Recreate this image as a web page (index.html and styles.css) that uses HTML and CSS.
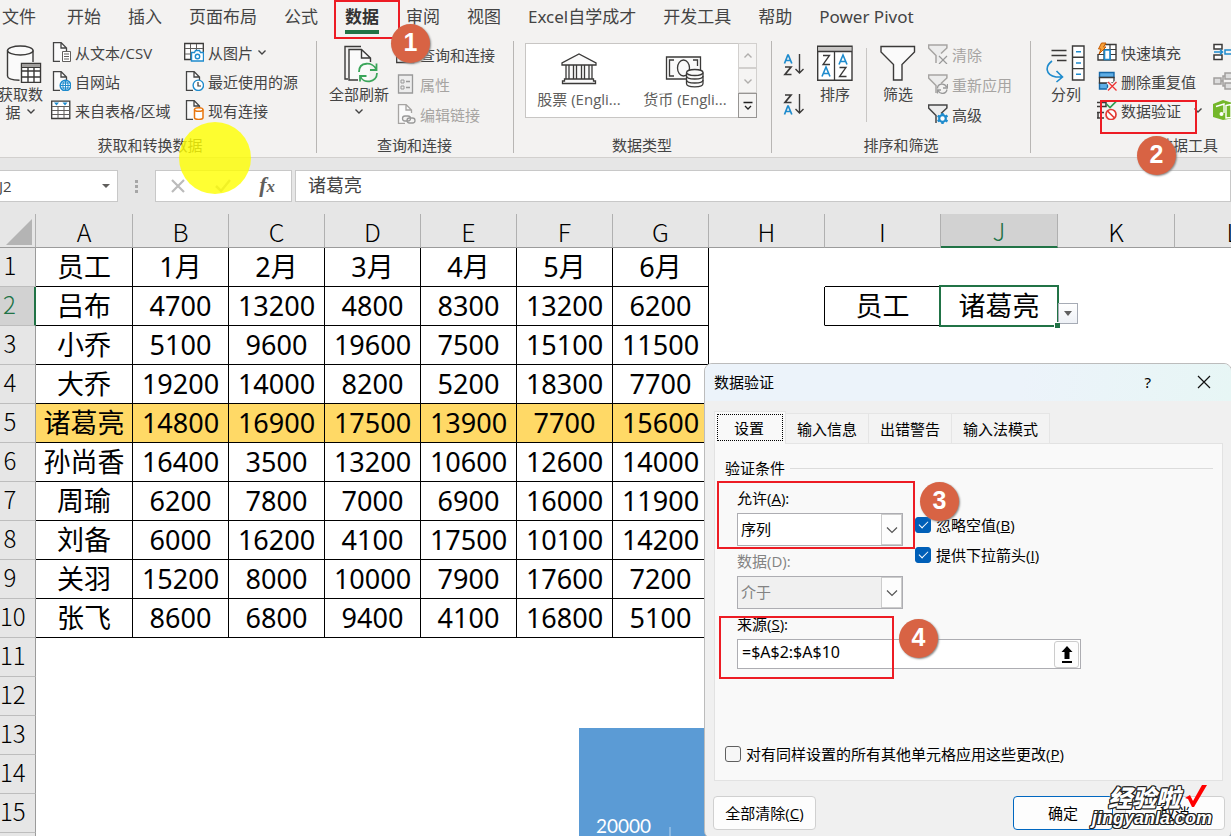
FILE: index.html
```html
<!DOCTYPE html>
<html lang="zh-CN">
<head>
<meta charset="utf-8">
<title>数据验证</title>
<link rel="stylesheet" href="styles.css">
</head>
<body>
<svg class="defs" aria-hidden="true">
  <symbol id="page" viewBox="0 0 20 20"><path d="M2.500 .5H10l5.500 5.500V19.500H2.500Z" fill="#fafafa" stroke="none"/><path d="M9 19.500H2.500V.5H10l5.500 5.500V9M10 .5V6h5.500" fill="none" stroke="currentColor" stroke-width="1.300"/></symbol>
  <symbol id="chev" viewBox="0 0 10 10"><path d="M1.500 3.500 5 7l3.500-3.500" fill="none" stroke="currentColor" stroke-width="1.400"/></symbol>
  <symbol id="funnel" viewBox="0 0 20 20"><path d="M.6 1h18.300v3L12 11v8l-4-3v-5L.6 4Z" fill="#ececec" stroke="none"/><path d="M13 9.500 18.900 4V1H.6v3L8 11.500V19" fill="none" stroke="currentColor" stroke-width="1.500"/></symbol>
</svg>
<div class="app">
  <nav class="tabs">
    <button class="file">文件</button><button>开始</button><button>插入</button><button>页面布局</button><button>公式</button><button class="active">数据</button><button>审阅</button><button>视图</button><button>Excel自学成才</button><button>开发工具</button><button>帮助</button><button>Power Pivot</button>
  </nav>

  <section class="ribbon">
    <div class="group g-get">
      <div class="group-body">
        <button class="big">
          <svg width="45" height="38" viewBox="0 0 45 38"><path d="M9.500 5v26c0 3 5 4.500 12.500 4.500h.5V20H35V5Z" fill="#fafafa"/><g fill="none" stroke="#3b3a39" stroke-width="1.400"><ellipse cx="22.300" cy="5.500" rx="12.800" ry="4.500" fill="#fafafa"/><path d="M9.500 5.500V31c0 2.500 5 4 12 4.200M35 5.500V17"/><path d="M23.500 18.500h19v19h-19Z" fill="#fff"/><path d="M23.500 26h19M23.500 32h19M30 22v15M36 22v15"/></g><path d="M24 19h18v3.500H24Z" fill="#a19f9d"/><path d="M23.500 22.500h19" stroke="#3b3a39"/></svg>
          <span>获取数</span><span>据 <svg width="10" height="10"><use href="#chev"/></svg></span>
        </button>
        <div class="stack">
          <button><svg width="20" height="20"><use href="#page"/><path d="M11.500 9.500h8v10h-8Z" fill="#fff" stroke="#605e5c"/><path d="M13 12h5M13 14.500h5M13 17h5" stroke="#605e5c"/></svg>从文本/CSV</button>
          <button><svg width="20" height="20"><use href="#page"/><circle cx="14.500" cy="14.500" r="5.300" fill="#fff" stroke="#1e8bcd" stroke-width="1.500"/><path d="M9 14.500h11M14.500 9v11M10.500 12h8M10.500 17h8M14.500 9c-3.500 3-3.500 8 0 11M14.500 9c3.500 3 3.500 8 0 11" fill="none" stroke="#1e8bcd"/></svg>自网站</button>
          <button><svg width="20" height="20"><path d="M.7 1.200h18.100v17.300H.7Z" fill="#fff" stroke="#3b3a39" stroke-width="1.300"/><path d="M1 6.500h18M1 10.500h18M1 14.500h18M7 6.500v12M13 6.500v12" stroke="#605e5c"/><path d="M3 2.500h5L5.500 5.500ZM11.500 2.500h5L14 5.500Z" fill="#1e8bcd"/></svg>来自表格/区域</button>
        </div>
        <div class="stack">
          <button><svg width="20" height="20"><path d="M.7 1.500h18.600v16H.7Z" fill="#fff" stroke="#3b3a39" stroke-width="1.300"/><path d="M1 6.500h18M1 12h18M6.500 2v15M12.500 2v15" stroke="#605e5c"/><path d="M7.500 10.500h3l1-2h4l1 2h3v8.500h-12Z" fill="#fff" stroke="#1e8bcd" stroke-width="1.400"/><circle cx="13.500" cy="14.500" r="2.200" fill="none" stroke="#1e8bcd" stroke-width="1.400"/></svg>从图片<svg width="10" height="10"><use href="#chev"/></svg></button>
          <button><svg width="20" height="20"><use href="#page"/><circle cx="14.300" cy="14.300" r="5.200" fill="#fff" stroke="#1e8bcd" stroke-width="1.400"/><path d="M14 11v4h3" fill="none" stroke="#3b3a39" stroke-width="1.200"/></svg>最近使用的源</button>
          <button><svg width="20" height="20"><use href="#page"/><path d="M10.500 9.500v8c0 2.500 8.500 2.500 8.500 0v-8" fill="#fff" stroke="#e8760f" stroke-width="1.500"/><ellipse cx="14.700" cy="9.500" rx="4.200" ry="1.800" fill="#fff" stroke="#e8760f" stroke-width="1.500"/></svg>现有连接</button>
        </div>
      </div>
      <div class="group-name">获取和转换数据</div>
    </div>

    <div class="group g-query">
      <div class="group-body">
        <button class="big">
          <svg width="45" height="38" viewBox="0 0 45 38"><path d="M12 4.500h12l8.500 8V35H12Z" fill="#fafafa"/><g fill="none" stroke="#3b3a39" stroke-width="1.400"><path d="M24 1.500H8V34h3M21 35H12V4.500h12.500l9 8.500v4M24.500 4.500V13h9"/></g><g fill="none" stroke="#3ba55a" stroke-width="1.800"><path d="M22 27c0-11 14-10 17-3M40 28c0 10-14 11-16.500 3.500M39.500 18.500V25H33M23 36.500V31h6.500"/></g></svg>
          <span>全部刷新</span><span><svg width="10" height="10"><use href="#chev"/></svg></span>
        </button>
        <div class="stack low">
          <button><svg width="20" height="20"><path d="M.7 3.500h17v15H.7Z" fill="#fff" stroke="#3b3a39" stroke-width="1.300"/><path d="M4 8h10M4 12h10" stroke="#605e5c"/></svg>查询和连接</button>
          <button disabled><svg width="20" height="20"><path d="M2.500 1h14v18h-14Z" fill="#ededed" stroke="#999" stroke-width="1.300"/><path d="M5 6h3v3H5ZM5 12h3v3H5Z" fill="none" stroke="#999"/><path d="M10 7.500h4M10 13.500h4" stroke="#999" stroke-width="1.500"/></svg>属性</button>
          <button disabled><svg width="20" height="20"><use href="#page"/><g fill="#f3f2f1" stroke="#999" stroke-width="1.300"><rect x="6.500" y="12" width="8" height="5" rx="2.500"/><rect x="11" y="14" width="8" height="5" rx="2.500" fill="none"/></g></svg>编辑链接</button>
        </div>
      </div>
      <div class="group-name">查询和连接</div>
    </div>

    <div class="group g-types">
      <div class="group-body">
        <div class="gallery">
          <button class="type"><svg width="36" height="36" viewBox="0 0 36 36"><g fill="#fafafa" stroke="#3b3a39" stroke-width="1.300"><path d="M1 13V11L18 2l17 9v2ZM5 13v14h26V13ZM3.500 27h29v2h2v2.500h-33V29h2Z"/><path d="M8 13v14M12.500 13v14M15.500 13v14M20.500 13v14M23.500 13v14M28 13v14" fill="none"/></g></svg>股票 (Engli...</button>
          <button class="type"><svg width="40" height="36" viewBox="0 0 40 36"><g fill="#fafafa" stroke="#3b3a39" stroke-width="1.300"><path d="M1.500 5h34v22h-34Z"/><path d="M9 8H4.500v16H9M28 8h4.500v6" fill="none"/><ellipse cx="18.500" cy="16" rx="6" ry="8"/><path d="M21.500 20.500v11c0 4.500 16.500 4.500 16.500 0v-11"/><ellipse cx="29.800" cy="20.500" rx="8.200" ry="3"/><path d="M21.500 24c0 4 16.500 4 16.500 0M21.500 28c0 4 16.500 4 16.500 0" fill="none"/></g></svg>货币 (Engli...</button>
          <div class="gallery-nav">
            <button class="up" disabled aria-label="向上"><svg width="10" height="10"><use href="#chev"/></svg></button>
            <button disabled aria-label="向下"><svg width="10" height="10"><use href="#chev"/></svg></button>
            <button class="more" aria-label="其他"><svg width="10" height="10"><path d="M.5 1.500h9M2 5l3 3 3-3" fill="none" stroke="#222" stroke-width="1.300"/></svg></button>
          </div>
        </div>
      </div>
      <div class="group-name">数据类型</div>
    </div>

    <div class="group g-sort">
      <div class="group-body">
        <div class="az">
          <button aria-label="升序"><svg width="22" height="24" viewBox="0 0 22 24"><g fill="none" stroke-width="1.700"><path d="M1.500 10.500 4.800 2h.5l3.500 8.500M2.500 7.500h5" stroke="#1e8bcd"/><path d="M2 14h6L2 21.500h6.500" stroke="#3b3a39"/><path d="M16.500 1v18.500M12.500 16l4 4 4-4" stroke="#3b3a39" stroke-width="1.400"/></g></svg></button>
          <button aria-label="降序"><svg width="22" height="24" viewBox="0 0 22 24"><g fill="none" stroke-width="1.700"><path d="M2 2h6L2 9.500h6.500" stroke="#3b3a39"/><path d="M1.500 21.500 4.800 13h.5l3.500 8.500M2.500 18.500h5" stroke="#1e8bcd"/><path d="M16.500 1v18.500M12.500 16l4 4 4-4" stroke="#3b3a39" stroke-width="1.400"/></g></svg></button>
        </div>
        <button class="big">
          <svg width="38" height="38" viewBox="0 0 38 38"><path d="M1.700 1.200h34.300v34H1.700Z" fill="#fff" stroke="#3b3a39" stroke-width="1.400"/><path d="M2.400 2h33v4H2.400Z" fill="#c8c6c4"/><g fill="none" stroke="#3b3a39" stroke-width="1.300"><path d="M2 6.500h34M18.500 6.500V35M7 10.500h6.500L7 19.500h7M23.500 22.500H30l-6.500 9h7"/><path d="M6 31.500l4-9.500 4 9.500M7.500 28.500h5M23 19.500l4-9.500 4 9.500M24.500 16.500h5" stroke="#1e8bcd" stroke-width="1.600"/></g></svg>
          <span>排序</span>
        </button>
        <div class="rule"></div>
        <button class="big">
          <svg width="38" height="38" viewBox="0 0 38 38"><path d="M2 1.500h33.500v5.500L23 19.500V35h-8.500V19.500L2 7Z" fill="#fafafa" stroke="#3b3a39" stroke-width="1.400"/></svg>
          <span>筛选</span>
        </button>
        <div class="stack low">
          <button disabled><svg width="20" height="20"><use href="#funnel"/><path d="M11 12l8 8M19 12l-8 8" stroke="#999" stroke-width="1.200"/></svg>清除</button>
          <button disabled><svg width="20" height="20"><use href="#funnel"/><path d="M9.500 14.500c0-5 7-6 9-1.500M19.500 10v4H15M19 15.500c-1 5-7 5-9 1M9.500 19.500v-3.500H13" fill="none" stroke="#999" stroke-width="1.300"/></svg>重新应用</button>
          <button><svg width="20" height="20"><use href="#funnel"/><circle cx="14.500" cy="14.500" r="3.300" fill="#fff" stroke="#1e8bcd" stroke-width="2.200"/><path d="M14.500 9v2M14.500 18v2M9.700 11.700l2 1.200M17.500 16.200l2 1.200M9.700 17.300l2-1.200M17.500 12.800l2-1.200" stroke="#1e8bcd" stroke-width="2.400"/></svg>高级</button>
        </div>
      </div>
      <div class="group-name">排序和筛选</div>
    </div>

    <div class="group g-tools">
      <div class="group-body">
        <button class="big">
          <svg width="40" height="38" viewBox="0 0 40 38"><g fill="none" stroke="#3b3a39" stroke-width="1.400"><path d="M5.500 5.500h15M5.500 10.500h15M11 15.500h9.500"/><path d="M26.500 1h11.500v34H26.500ZM26.500 12.300H38M26.500 23.600H38" fill="#fff"/></g><path d="M30 6.700h5M30 18h5M30 29.300h5" stroke="#1e8bcd" stroke-width="1.500"/><path d="M6 16c-7 5-7 14 4 16h6M10.500 26l6 6-6 5" fill="none" stroke="#1e8bcd" stroke-width="1.600"/></svg>
          <span>分列</span>
        </button>
        <div class="stack tools">
          <button><svg width="20" height="20"><path d="M6.500 2.500h12.500v15.500h-18V12" fill="#fff" stroke="#3b3a39" stroke-width="1.400"/><path d="M1 12.500h18M7 7.500h12M7 7v11M13 2.500V18" stroke="#3b3a39" stroke-width="1.200"/><path d="M7.500 8h5.500v9.500H7.500Z" fill="#fff" stroke="#1e8bcd" stroke-width="1.600"/><path d="M4.500 1h4.500L6.500 5H9l-7 7 2-5H1.500Z" fill="#f7a23b" stroke="#c65a00"/></svg>快速填充</button>
          <button><svg width="20" height="20"><path d="M2.500 1.500h14.500v5H2.500ZM2.500 12h8v6h-8Z" fill="#5eaee6" stroke="#1668a8" stroke-width="1.400"/><path d="M2.500 6.500h14.500V12H2.500Z" fill="#fff" stroke="#3b3a39" stroke-width="1.300"/><path d="M11 11l8.500 8.500M19.500 11 11 19.500" stroke="#f3f2f1" stroke-width="4"/><path d="M11 11l8.500 8.500M19.500 11 11 19.500" stroke="#e33" stroke-width="1.300"/></svg>删除重复值</button>
          <button><svg width="20" height="20"><path d="M0 2.500h9v4H0M0 18h7M0 12.500h7M1 12.500V18" fill="none" stroke="#3b3a39" stroke-width="1.500"/><path d="M9.500 4l3.500 3.500L19.500 1" fill="none" stroke="#2e9b50" stroke-width="1.600"/><circle cx="14" cy="14.500" r="5" fill="#fff" stroke="#e33b35" stroke-width="1.700"/><path d="M10.500 11l7 7" stroke="#e33b35" stroke-width="1.700"/></svg>数据验证<svg class="far" width="10" height="10"><use href="#chev"/></svg></button>
        </div>
        <div class="stack edge">
          <button aria-label="合并计算"><svg width="20" height="20"><path d="M1 2.500h8v4.500H1ZM1 13h8v4.500H1Z" fill="#fff" stroke="#3b3a39" stroke-width="1.500"/><path d="M1 10h9M7 7.500 9.500 10 7 12.500M12 8h8v4h-8Z" fill="none" stroke="#1e8bcd" stroke-width="1.500"/></svg></button>
          <button aria-label="关系"><svg width="20" height="20"><path d="M1 7h7v6H1ZM12 2h8v6h-8ZM12 12h8v6h-8ZM8 10h2V5h2M10 10v5h2" fill="#ddd" stroke="#a19f9d" stroke-width="1.500"/></svg></button>
          <button aria-label="管理数据模型"><svg width="20" height="20"><path d="M0 4 10 0l10 3v15l-10 2L0 17Z" fill="#74b72b"/><path d="M3 6.500 11 4v9M13 5.500l5-1v13l-5 .5Z" fill="none" stroke="#fff" stroke-width="1.400"/><circle cx="8.500" cy="14" r="2" fill="#fff"/></svg></button>
        </div>
      </div>
      <div class="group-name">数据工具</div>
    </div>
  </section>

  <section class="formula-bar">
    <label class="name-box"><input value="J2" aria-label="名称框"><svg width="10" height="10"><path d="M1 3h8L5 7Z" fill="#605e5c"/></svg></label>
    <svg class="dots" width="4" height="16"><path d="M0 1h3v3H0ZM0 6h3v3H0ZM0 11h3v3H0Z" fill="#a6a6a6"/></svg>
    <div class="fx">
      <button aria-label="取消输入"><svg width="16" height="16"><path d="M2 2l12 12M14 2 2 14" stroke="#bbb" stroke-width="2.200"/></svg></button>
      <button aria-label="输入"><svg width="18" height="16"><path d="M2 8l5 5L16 2" fill="none" stroke="#bbb" stroke-width="2.500"/></svg></button>
      <button class="fn" aria-label="插入函数"><i>f<small>x</small></i></button>
    </div>
    <input class="formula" value="诸葛亮" aria-label="编辑栏">
  </section>

  <main class="sheet">
    <table>
      <colgroup><col class="c-row"><col class="c-a"><col span="6" class="c-data"><col span="2" class="c-wide"><col span="3" class="c-wider"></colgroup>
      <thead><tr><th class="corner"><svg width="26" height="26"><path d="M26 0v26H0Z" fill="#b4b4b4"/></svg></th><th>A</th><th>B</th><th>C</th><th>D</th><th>E</th><th>F</th><th>G</th><th>H</th><th>I</th><th class="sel">J</th><th>K</th><th>L</th></tr></thead>
      <tbody>
        <tr><th>1</th><td>员工</td><td>1月</td><td>2月</td><td>3月</td><td>4月</td><td>5月</td><td>6月</td><td class="blank"></td><td class="blank under"></td><td class="blank under"></td></tr>
        <tr><th class="sel">2</th><td>吕布</td><td>4700</td><td>13200</td><td>4800</td><td>8300</td><td>13200</td><td>6200</td><td class="blank before"></td><td>员工</td><td class="active-cell">诸葛亮<button class="cell-drop" aria-label="下拉列表"><svg width="8" height="5"><path d="M0 0h8L4 5Z" fill="#606060"/></svg></button></td></tr>
        <tr><th>3</th><td>小乔</td><td>5100</td><td>9600</td><td>19600</td><td>7500</td><td>15100</td><td>11500</td></tr>
        <tr><th>4</th><td>大乔</td><td>19200</td><td>14000</td><td>8200</td><td>5200</td><td>18300</td><td>7700</td></tr>
        <tr class="hit"><th>5</th><td>诸葛亮</td><td>14800</td><td>16900</td><td>17500</td><td>13900</td><td>7700</td><td>15600</td></tr>
        <tr><th>6</th><td>孙尚香</td><td>16400</td><td>3500</td><td>13200</td><td>10600</td><td>12600</td><td>14000</td></tr>
        <tr><th>7</th><td>周瑜</td><td>6200</td><td>7800</td><td>7000</td><td>6900</td><td>16000</td><td>11900</td></tr>
        <tr><th>8</th><td>刘备</td><td>6000</td><td>16200</td><td>4100</td><td>17500</td><td>10100</td><td>14200</td></tr>
        <tr><th>9</th><td>关羽</td><td>15200</td><td>8000</td><td>10000</td><td>7900</td><td>17600</td><td>7200</td></tr>
        <tr><th>10</th><td>张飞</td><td>8600</td><td>6800</td><td>9400</td><td>4100</td><td>16800</td><td>5100</td></tr>
        <tr><th>11</th></tr>
        <tr><th>12</th></tr>
        <tr><th>13</th></tr>
        <tr><th>14</th></tr>
        <tr><th>15</th></tr>
        <tr><th></th></tr>
      </tbody>
    </table>
  </main>

  <div class="chart"><span>20000</span><i></i></div>

  <form class="dialog" role="dialog" aria-label="数据验证">
    <header><h1>数据验证</h1><button type="button" class="help" aria-label="帮助">?</button><button type="button" aria-label="关闭"><svg width="14" height="14"><path d="M1 1l12 12M13 1 1 13" stroke="#111" stroke-width="1.200"/></svg></button></header>
    <div class="dialog-body">
      <div class="dialog-tabs"><button type="button" class="on">设置</button><button type="button">输入信息</button><button type="button">出错警告</button><button type="button">输入法模式</button></div>
      <div class="panel">
        <div class="legend">验证条件</div>
        <div class="fields">
          <div class="column">
            <label for="allow">允许(<u>A</u>):</label>
            <div class="combo"><select id="allow"><option>序列</option></select><span><svg width="12" height="12"><path d="M1 3.500l5 5 5-5" fill="none" stroke="#555" stroke-width="1.200"/></svg></span></div>
            <label for="cond" class="off">数据(D):</label>
            <div class="combo"><select id="cond" disabled><option>介于</option></select><span><svg width="12" height="12"><path d="M1 3.500l5 5 5-5" fill="none" stroke="#555" stroke-width="1.200"/></svg></span></div>
          </div>
          <div class="checks">
            <label><input type="checkbox" checked>忽略空值(<u>B</u>)</label>
            <label><input type="checkbox" checked>提供下拉箭头(<u>I</u>)</label>
          </div>
        </div>
        <div class="source">
          <label for="source">来源(<u>S</u>):</label>
          <div class="ref-box"><input id="source" value="=$A$2:$A$10"><button type="button" aria-label="折叠对话框"><svg width="12" height="18"><path d="M6 0l5.500 6h-3v7h-5V6h-3ZM1 15h10v2H1Z" fill="#000"/></svg></button></div>
        </div>
        <label class="apply"><input type="checkbox">对有同样设置的所有其他单元格应用这些更改(<u>P</u>)</label>
      </div>
      <footer><button type="button" class="clear">全部清除(<u>C</u>)</button><button type="button" class="ok">确定</button><button type="button">取消</button></footer>
    </div>
  </form>

  <div class="spot"></div>
  <div class="frame f1"></div><div class="frame f2"></div><div class="frame f3"></div><div class="frame f4"></div>
  <div class="badge b1">1</div><div class="badge b2">2</div><div class="badge b3">3</div><div class="badge b4">4</div>
  <div class="brand"><div><b>经验啦</b><svg width="24" height="24"><path d="M1 14l5-3 3 6L18 1h5L10 23H8L4 15Z" fill="#f00"/></svg></div><em>jingyanla.com</em></div>
</div>
</body>
</html>
```
FILE: styles.css
```css
* { box-sizing: border-box; }
body { margin: 0; font-family: "Open Sans", "Noto Sans CJK SC", sans-serif; font-size: 15px; color: #444; }
button, input, select { font: inherit; color: inherit; }
button { border: 0; padding: 0; background: none; white-space: nowrap; }
svg { display: block; flex: none; }
.defs { position: absolute; width: 0; height: 0; }
.app { position: relative; height: 100vh; overflow: hidden; display: flex; flex-direction: column; background: #fff; }

/* Ribbon tabs */
.tabs { flex: none; display: flex; gap: 27px; height: 37px; padding-left: 2px; background: #f3f2f1; font-family: "Noto Sans", "Noto Sans CJK SC", sans-serif; }
.tabs button { font-size: 17px; line-height: 34px; height: 34px; white-space: nowrap; }
.tabs .file { margin-right: 4px; }
.tabs .active { font-weight: bold; border-bottom: 4px solid #217346; color: #333; }

/* Ribbon groups */
.ribbon { flex: none; display: flex; height: 121px; padding-top: 4px; background: #f3f2f1; border-bottom: 1px solid #d2d0ce; }
.group { flex: none; height: 112px; border-right: 1px solid #b8b6b4; }
.group-body { display: flex; height: 96px; }
.group-name { line-height: 16px; text-align: center; }
.g-get { width: 317px; }
.g-query { width: 197px; padding-left: 12px; }
.g-types { width: 258px; padding-left: 11px; }
.g-sort { width: 259px; padding-left: 11px; }
.g-tools { width: 313px; padding-left: 15px; border: 0; }
.g-get .group-name { padding-right: 16px; }
.g-query .group-name { padding-right: 13px; }
.g-types .group-name { padding-right: 12px; }
.g-sort .group-name { padding-right: 11px; }
.g-tools .group-name { padding-right: 14px; }
.g-get .group-body { margin-left: -2px; gap: 8px; }
.g-get .stack:nth-child(2) { width: 125px; }
.g-query .group-body { gap: 7px; }
.big { display: flex; flex-direction: column; align-items: center; padding-top: 4px; line-height: 18px; }
.big svg { margin-bottom: 2px; }
.big span { display: flex; align-items: center; gap: 5px; min-height: 18px; }
.stack { display: flex; flex-direction: column; gap: 5px; }
.stack.low { gap: 6px; padding-top: 2px; }
.stack button { display: flex; align-items: center; gap: 4px; height: 24px; padding-bottom: 2px; color: #444; }
.stack button:disabled { color: #a6a4a2; }
.gallery { display: flex; width: 232px; height: 75px; margin-top: 2px; border: 1px solid #c8c6c4; background: #fff; }
.type { display: flex; flex-direction: column; align-items: center; width: 106px; padding-top: 8px; line-height: 22px; color: #605e5c; }
.gallery-nav { display: flex; flex-direction: column; flex: 1; margin: -1px -1px -1px 0; }
.gallery-nav button { flex: 1; display: grid; place-items: center; border: 1px solid #d2d0ce; background: #f5f4f3; color: #b0aeac; }
.gallery-nav .up svg { transform: rotate(180deg); }
.gallery-nav .more { border-color: #979593; }
.az { display: flex; flex-direction: column; gap: 16px; padding-top: 12px; margin-right: 11px; }
.rule { width: 1px; height: 74px; margin: 7px 12px 0 12px; background: #c8c6c4; }
.g-sort .low { margin-left: 11px; }
.tools { margin-left: 11px; width: 108px; }
.tools .far { margin-left: 8px; }
.edge { margin-left: 8px; }

/* Formula bar */
.formula-bar { flex: none; display: flex; align-items: center; height: 56px; background: #e6e6e6; }
.name-box, .fx, .formula { height: 32px; border: 1px solid #c8c8c8; background: #fff; }
.name-box { display: flex; align-items: center; width: 124px; margin-left: -6px; padding: 0 6px 0 4px; }
.name-box input { flex: 1; min-width: 0; border: 0; padding: 0; background: none; }
.dots { margin: 0 15px 0 17px; padding-top: 1px; }
.fx { display: flex; align-items: center; justify-content: space-between; width: 137px; margin: 0 3px 0 1px; padding: 0 16px 0 14px; }
.fn { font-family: "Liberation Serif", serif; font-size: 22px; font-weight: bold; line-height: 24px; color: #605e5c; }
.fn small { font-size: 17px; }
.formula { flex: 1; min-width: 0; padding: 0 12px 4px; font-size: 18px; }

/* Worksheet */
.sheet { flex: 1; overflow: hidden; }
table { width: 1292px; table-layout: fixed; border-collapse: separate; border-spacing: 0; color: #000; }
.c-row { width: 36px; }
.c-a { width: 97px; }
.c-data { width: 96px; }
.c-wide { width: 116px; }
.c-wider { width: 117px; }
th, td { padding: 0; text-align: center; white-space: nowrap; }
th { background: #e6e6e6; font-family: "Noto Sans CJK SC", sans-serif; font-weight: 300; font-size: 25px; line-height: 30px; }
thead th { height: 34px; line-height: 28px; border-right: 1px solid #b0b0b0; border-bottom: 1px solid #9b9b9b; }
thead .corner svg { margin: 3px 0 0 6px; }
tbody th { height: 39px; padding: 0 15px 4px 0; font-size: 24px; border-right: 1px solid #9b9b9b; border-bottom: 1px solid #bdbdbd; }
th.sel { background: #d2d2d2; color: #217346; }
thead th.sel { border-bottom: 2px solid #217346; }
tbody th.sel { border-right: 2px solid #217346; }
td { height: 39px; font-family: "Noto Sans", "Noto Sans CJK SC", sans-serif; font-size: 27px; line-height: 36px; border-right: 1px solid #000; border-bottom: 1px solid #000; }
td.blank { border-color: transparent; }
td.under { border-bottom-color: #000; }
td.before { border-right-color: #000; }
.hit td { background: #ffd966; }
.active-cell { position: relative; }
.active-cell::before { content: ""; position: absolute; inset: -2px; border: 2px solid #217346; }
.active-cell::after { content: ""; position: absolute; right: -3px; bottom: -3px; width: 5px; height: 5px; background: #217346; box-shadow: -1px -1px 0 #fff; }
.cell-drop { position: absolute; left: 100%; margin-left: 1px; bottom: 1px; width: 20px; height: 21px; display: grid; place-items: center; border: 1px solid #a6abb5; background: linear-gradient(#fff, #eef1f6); }
.chart { position: absolute; left: 579px; top: 728px; right: 0; bottom: 0; padding: 86px 17px 0; display: flex; gap: 18px; background: #5b9bd5; color: #fff; font: 19px/24px Lato, sans-serif; overflow: hidden; }
.chart i { width: 2px; height: 20px; margin-top: 13px; background: #8ab8e2; }

/* Dialog */
.dialog { position: absolute; left: 704px; top: 363px; width: 528px; border: 1px solid #bcbcbc; border-radius: 8px; background: #f0f0f0; color: #000; overflow: hidden; }
.dialog header { display: flex; align-items: center; height: 37px; padding: 0 20px 2px 9px; background: linear-gradient(100deg, #ecf3fa 60%, #e7f6f5); }
h1 { flex: 1; margin: 0; font-size: 15px; font-weight: normal; }
.help { margin-right: 46px; font-family: "Noto Sans", sans-serif; }
.dialog-body { padding: 10px 8px 8px 9px; }
.dialog-tabs { display: flex; align-items: flex-end; position: relative; margin-bottom: -1px; }
.dialog-tabs button { height: 31px; padding: 0 11px; border: 1px solid #e5e5e5; border-left: 0; background: #f3f3f3; }
.dialog-tabs .on { height: 33px; width: 72px; padding: 0 2px 2px 0; border-left: 1px solid #e5e5e5; border-bottom: 0; background: #f9f9f9; outline: 1px dotted #000; outline-offset: -4px; }
.panel { padding: 14px 9px 16px 10px; border: 1px solid #e2e2e2; background: #f9f9f9; line-height: 20px; }
.legend { display: flex; align-items: center; gap: 5px; margin-bottom: 10px; }
.legend::after { content: ""; flex: 1; height: 1px; background: #dcdcdc; }
.fields, .source { padding-left: 12px; }
.fields { display: flex; gap: 12px; }
.column { width: 166px; }
.column > label, .source label { display: block; margin-bottom: 5px; }
.off { color: #838383; }
.combo { position: relative; height: 33px; margin-bottom: 5px; }
select { appearance: none; width: 100%; height: 33px; padding: 0 3px 2px; border: 1px solid #adadb2; border-radius: 0; background: #fff; color: #000; opacity: 1; }
select:disabled { background: #f0f0f0; color: #838383; }
.combo span { position: absolute; top: 1px; right: 1px; bottom: 1px; width: 21px; display: grid; place-items: center; border: 1px solid #ccc; background: #fdfdfd; pointer-events: none; }
.checks { display: flex; flex-direction: column; gap: 10px; padding-top: 27px; }
.checks label, .apply { display: flex; align-items: center; }
input[type="checkbox"] { appearance: none; flex: none; width: 16px; height: 16px; margin: 0 5px 0 0; border: 1px solid #5f5f5f; border-radius: 3px; background: #f6f6f6; }
input[type="checkbox"]:checked { display: grid; place-items: center; border-color: #005fb8; background: #005fb8; }
input[type="checkbox"]:checked::after { content: ""; width: 8px; height: 4px; margin-bottom: 3px; border: solid #fff; border-width: 0 0 1px 1px; transform: rotate(-45deg); }
.ref-box { display: flex; width: 344px; height: 30px; border: 1px solid #adadb2; background: #fff; }
.ref-box input { flex: 1; min-width: 0; padding: 0 4px 4px; border: 0; background: none; font-family: "Noto Sans", sans-serif; font-size: 16px; }
.ref-box button { width: 25px; margin: 1px 1px 0 0; display: grid; place-items: center; border: 1px solid #ccc; border-radius: 3px; background: #fdfdfd; }
.apply { margin-top: 75px; }
footer { display: flex; gap: 12px; margin: 15px -2px 0 -1px; }
footer button { width: 100px; height: 34px; padding-bottom: 2px; border: 1px solid #d0d0d0; border-radius: 4px; background: #fdfdfd; }
footer .clear { width: 103px; margin-right: auto; }
footer .ok { border-color: #0067c0; }

/* Callouts laid over the window */
.spot { position: absolute; left: 179px; top: 122px; width: 72px; height: 72px; border-radius: 50%; background: rgba(255, 255, 0, .8); }
.frame { position: absolute; border: 2px solid #ed1c24; }
.f1 { left: 334px; top: 0; width: 66px; height: 39px; }
.f2 { left: 1100px; top: 100px; width: 97px; height: 34px; }
.f3 { left: 717px; top: 481px; width: 198px; height: 68px; }
.f4 { left: 719px; top: 616px; width: 175px; height: 63px; }
.badge { position: absolute; width: 39px; height: 39px; border-radius: 50%; background: #d86344; box-shadow: 1px 1px 2px #888; color: #fff; font: bold 25px/37px "Liberation Sans", sans-serif; text-align: center; }
.b1 { left: 391px; top: 24px; }
.b2 { left: 1137px; top: 136px; }
.b3 { left: 920px; top: 482px; }
.b4 { left: 899px; top: 619px; }
.brand { position: absolute; left: 1092px; top: 784px; color: #fff; font-style: italic; font-weight: bold; text-shadow: 1px 0 #222, -1px 0 #222, 0 1px #222, 0 -1px #222, 1px 1px #222, -1px -1px #222, 1px -1px #222, -1px 1px #222; }
.brand div { display: flex; gap: 4px; padding-left: 16px; height: 25px; font-size: 24px; line-height: 27px; }
.brand em { display: block; font: italic bold 18px/19px "Liberation Sans", sans-serif; }
```
